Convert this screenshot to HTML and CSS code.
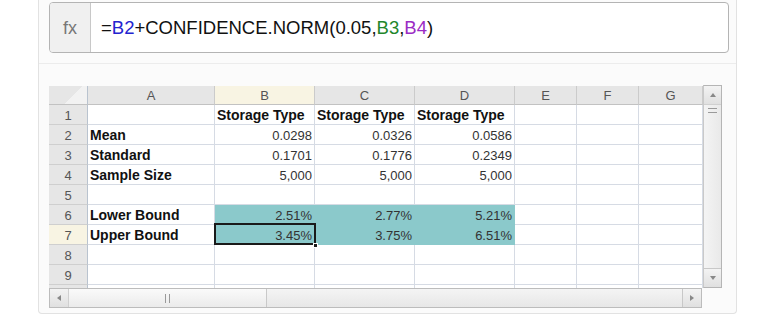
FILE: index.html
```html
<!DOCTYPE html>
<html>
	<head>
		<title>Confidence Norm - Spreadsheet</title>
		<link rel="stylesheet" href="styles.css">
	</head>
	<body>
		<div class="card">
			<div class="formula-wrap">
				<div class="formula-bar">
					<div class="fx">fx</div>
					<div class="formula">=<span class="ref-blue">B2</span>+CONFIDENCE.NORM(0.05,<span class="ref-green">B3</span>,<span class="ref-purple">B4</span>)</div>
				</div>
			</div>

			<div class="sheet-wrap">
				<div class="sheet-main">
					<div class="grid">
						<!-- column headers -->
						<div class="hd corner"></div>
						<div class="hd">A</div>
						<div class="hd active">B</div>
						<div class="hd">C</div>
						<div class="hd">D</div>
						<div class="hd">E</div>
						<div class="hd">F</div>
						<div class="hd">G</div>

						<div class="rh">1</div>
						<div class="c"></div>
						<div class="c lbl">Storage Type</div>
						<div class="c lbl">Storage Type</div>
						<div class="c lbl">Storage Type</div>
						<div class="c"></div><div class="c"></div><div class="c"></div>

						<div class="rh">2</div>
						<div class="c lbl">Mean</div>
						<div class="c num">0.0298</div>
						<div class="c num">0.0326</div>
						<div class="c num">0.0586</div>
						<div class="c"></div><div class="c"></div><div class="c"></div>

						<div class="rh">3</div>
						<div class="c lbl">Standard</div>
						<div class="c num">0.1701</div>
						<div class="c num">0.1776</div>
						<div class="c num">0.2349</div>
						<div class="c"></div><div class="c"></div><div class="c"></div>

						<div class="rh">4</div>
						<div class="c lbl">Sample Size</div>
						<div class="c num">5,000</div>
						<div class="c num">5,000</div>
						<div class="c num">5,000</div>
						<div class="c"></div><div class="c"></div><div class="c"></div>

						<div class="rh">5</div>
						<div class="c"></div><div class="c"></div><div class="c"></div>
						<div class="c"></div><div class="c"></div><div class="c"></div><div class="c"></div>

						<div class="rh">6</div>
						<div class="c lbl">Lower Bound</div>
						<div class="c num fill">2.51%</div>
						<div class="c num fill">2.77%</div>
						<div class="c num fill">5.21%</div>
						<div class="c"></div><div class="c"></div><div class="c"></div>

						<div class="rh active">7</div>
						<div class="c lbl">Upper Bound</div>
						<div class="c num fill selected">3.45%</div>
						<div class="c num fill">3.75%</div>
						<div class="c num fill">6.51%</div>
						<div class="c"></div><div class="c"></div><div class="c"></div>

						<div class="rh">8</div>
						<div class="c"></div><div class="c"></div><div class="c"></div>
						<div class="c"></div><div class="c"></div><div class="c"></div><div class="c"></div>

						<div class="rh">9</div>
						<div class="c"></div><div class="c"></div><div class="c"></div>
						<div class="c"></div><div class="c"></div><div class="c"></div><div class="c"></div>

						<div class="rh"></div>
						<div class="c"></div><div class="c"></div><div class="c"></div>
						<div class="c"></div><div class="c"></div><div class="c"></div><div class="c"></div>
					</div>

					<div class="vscroll">
						<div class="sb-btn"><span class="arrow-up"></span></div>
						<div class="vthumb"><span class="grip-h"></span></div>
						<div class="vtrack"></div>
						<div class="sb-btn"><span class="arrow-down"></span></div>
					</div>
				</div>

				<div class="hscroll">
					<div class="sb-btn"><span class="arrow-left"></span></div>
					<div class="hthumb"><span class="grip-v"></span></div>
					<div class="htrack"></div>
					<div class="sb-btn"><span class="arrow-right"></span></div>
				</div>
			</div>
		</div>
	</body>
</html>
```

FILE: styles.css
```css
body {
	margin: 0;
	background-color: white;
	font-family: "Liberation Sans", Arial, sans-serif;
}

.card {
	width: 697px;
	margin-left: 38px;
	background-color: #fbfbfb;
	border: 1px solid #e2e2e2;
	border-top: none;
	border-radius: 0 0 4px 4px;
}

/* formula bar */

.formula-wrap {
	padding: 2px 7px 10px 10px;
	border-bottom: 1px solid #ececec;
}

.formula-bar {
	display: flex;
	height: 49px;
	background-color: white;
	border: 1px solid #b4b4b4;
	border-radius: 4px;
	overflow: hidden;
}

.fx {
	width: 40px;
	background-color: #f0f0f0;
	border-right: 1px solid #c8c8c8;
	color: #777;
	font-size: 18px;
	line-height: 51px;
	text-align: center;
}

.formula {
	padding-left: 10px;
	font-size: 18.5px;
	line-height: 49px;
	color: #111;
}

.ref-blue { color: #2323cf; }
.ref-green { color: #23862a; }
.ref-purple { color: #9b2bc4; }

/* sheet */

.sheet-wrap {
	padding: 21px 0 5px 10px;
}

.sheet-main {
	display: flex;
	height: 203px;
}

.grid {
	display: grid;
	grid-template-columns: 39px 127px 100px 100px 100px 62px 62px 64px;
	grid-template-rows: 19px;
	grid-auto-rows: 20px;
	width: 654px;
	height: 202px;
	margin-top: 1px;
	overflow: hidden;
	background-color: white;
}

.grid > div {
	box-sizing: border-box;
	white-space: nowrap;
	overflow: visible;
}

.hd {
	background-color: #e6e6e6;
	border-right: 1px solid #cbcbcb;
	border-bottom: 1px solid #c2c2c2;
	color: #555;
	font-size: 13px;
	line-height: 20px;
	text-align: center;
}

.hd.corner {
	background: linear-gradient(135deg, #e6e6e6 60%, #f2f2f2 60%);
	border-right: 1px solid #b9c3cf;
}

.hd.active,
.rh.active {
	background-color: #f8f4e3;
}

.rh {
	background-color: #e6e6e6;
	border-right: 1px solid #b9c3cf;
	border-bottom: 1px solid #cfcfcf;
	color: #555;
	font-size: 13px;
	line-height: 21px;
	text-align: center;
}

.c {
	border-right: 1px solid #d6dbe4;
	border-bottom: 1px solid #d6dbe4;
	font-size: 13px;
	line-height: 21px;
	color: #333;
}

.lbl {
	padding-left: 2px;
	font-size: 14px;
	font-weight: bold;
	color: #111;
}

.num {
	padding-right: 2px;
	text-align: right;
}

.fill {
	background-color: #8bc9cb;
	border-color: #8bc9cb;
}

.selected {
	position: relative;
}

.selected::before {
	content: "";
	position: absolute;
	left: -1px;
	top: -2px;
	right: -2px;
	bottom: -1px;
	border: 2px solid #1a1a1a;
}

.selected::after {
	content: "";
	position: absolute;
	right: -4px;
	bottom: -4px;
	width: 5px;
	height: 5px;
	background-color: #1a1a1a;
	border: 1px solid white;
	box-sizing: border-box;
}

/* scrollbars */

.vscroll {
	display: flex;
	flex-direction: column;
	width: 19px;
	border: 1px solid #b5b5b5;
	border-left: 1px solid #c9c9c9;
	box-sizing: border-box;
	background: linear-gradient(90deg, #f4f4f4, #e9e9e9);
}

.hscroll {
	display: flex;
	width: 653px;
	height: 20px;
	border: 1px solid #bcbcbc;
	box-sizing: border-box;
	background: linear-gradient(180deg, #f4f4f4, #e7e7e7);
}

.sb-btn {
	flex: 0 0 18px;
	display: flex;
	align-items: center;
	justify-content: center;
	background: linear-gradient(180deg, #f3f3f3, #e0e0e0);
}

.vscroll .sb-btn:first-child {
	border-bottom: 1px solid #d0d0d0;
}

.vscroll .sb-btn:last-child {
	border-top: 1px solid #c8c8c8;
}

.hscroll .sb-btn:first-child {
	border-right: 1px solid #d0d0d0;
}

.hscroll .sb-btn:last-child {
	border-left: 1px solid #c8c8c8;
}

.vthumb {
	flex: 0 0 10px;
	display: flex;
	justify-content: center;
	padding-top: 3px;
}

.vtrack,
.htrack {
	flex: 1;
}

.hthumb {
	flex: 0 0 197px;
	display: flex;
	align-items: center;
	justify-content: center;
	background: linear-gradient(180deg, #fafafa, #ebebeb);
	border-right: 1px solid #c9c9c9;
}

.grip-h {
	width: 9px;
	height: 3px;
	border-top: 1px solid #9a9a9a;
	border-bottom: 1px solid #9a9a9a;
}

.grip-v {
	width: 3px;
	height: 9px;
	border-left: 1px solid #9a9a9a;
	border-right: 1px solid #9a9a9a;
}

.arrow-up,
.arrow-down,
.arrow-left,
.arrow-right {
	width: 0;
	height: 0;
	border: 3px solid transparent;
}

.arrow-up { border-bottom: 4px solid #888; border-top: none; }
.arrow-down { border-top: 4px solid #888; border-bottom: none; }
.arrow-left { border-right: 4px solid #888; border-left: none; }
.arrow-right { border-left: 4px solid #888; border-right: none; }
```
